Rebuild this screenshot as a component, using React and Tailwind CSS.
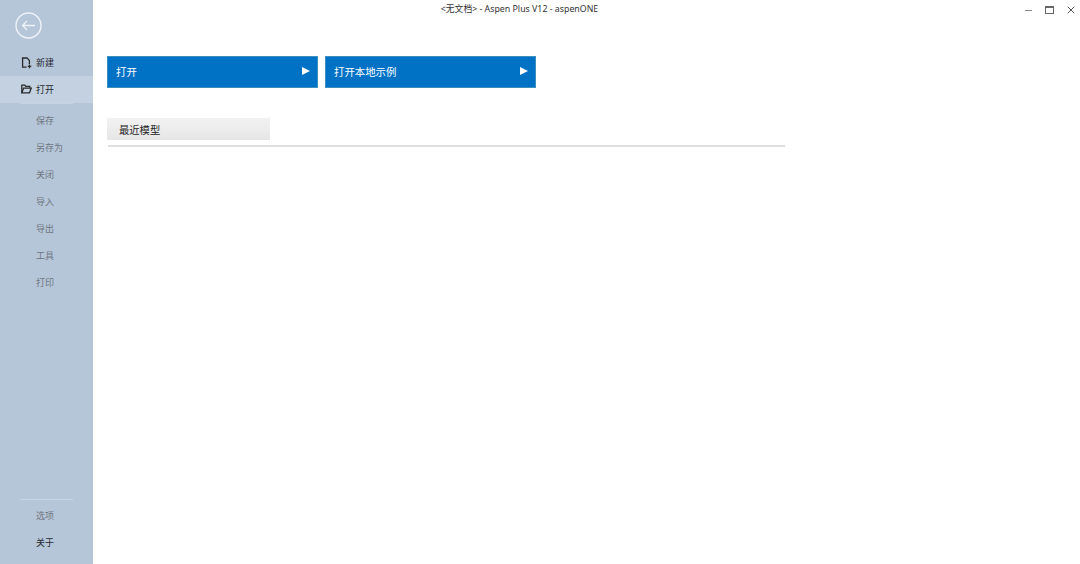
import { Minus, X } from "lucide-react"

const font = { cjk: "font-['Noto_Sans','Noto_Sans_CJK_SC',sans-serif]" }

function NewIcon() {
    return (
        <svg width="11" height="12" viewBox="0 0 11 12" fill="none" stroke="#2b2b2b" strokeWidth="1.3">
            <path d="M5.5 10.2H1.6V1H6l2.4 2.4V7" />
            <path d="M8.5 7.6v3.6M6.7 9.4h3.6" />
        </svg>
    )
}

function OpenIcon() {
    return (
        <svg width="11" height="10" viewBox="0 0 11 10" fill="none" stroke="#2b2b2b" strokeWidth="1.3">
            <path d="M.8 8.8V1.2h3l1 1.2h4v1.4" />
            <path d="M.8 8.8h7.7l1.7-4.6H2.6z" />
        </svg>
    )
}

function SideItem({ label, icon, active, dark }) {
    return (
        <div className={`h-[27px] flex items-center pl-[36px] relative text-[9px] ${active ? "bg-[#c3d1e1]" : ""} ${dark ? "text-[#262a30]" : "text-[#6f7780]"}`}>
            {icon && <span className="absolute left-[21px] top-[8px] flex">{icon}</span>}
            <span>{label}</span>
        </div>
    )
}

function BlueButton({ label, width }) {
    return (
        <div className={`h-[32px] ${width} bg-[#0072c6] border border-[#3d8fbf] flex items-center justify-between pl-[8px] pr-[7px] text-white text-[10.4px]`}>
            <span className="pt-[2px]">{label}</span>
            <span className="w-0 h-0 mb-[3px] border-y-[4px] border-y-transparent border-l-[8px] border-l-white"></span>
        </div>
    )
}

function App() {
    const greyItems = ["保存", "另存为", "关闭", "导入", "导出", "工具", "打印"]

    return (
        <div className={`w-[1080px] h-[564px] flex bg-white overflow-hidden ${font.cjk}`}>
            <aside className="w-[93px] h-full bg-[#b5c6d9] flex flex-col shrink-0 pt-[12px] pb-[8px]">
                <div className="pl-[15px] mb-[10px]">
                    <svg width="27" height="27" viewBox="0 0 27 27" fill="none" stroke="#eef3f8">
                        <circle cx="13.5" cy="13.5" r="12.5" strokeWidth="1.4" />
                        <path d="M20 13.5H7.5M12 9l-4.5 4.5L12 18" strokeWidth="1.3" />
                    </svg>
                </div>
                <SideItem label="新建" dark icon={<NewIcon />} />
                <SideItem label="打开" dark active icon={<OpenIcon />} />
                <div className="mx-[20px] h-px bg-[#c6d3e2]"></div>
                <div className="pt-[3px]">
                    {greyItems.map((item) => (
                        <SideItem key={item} label={item} />
                    ))}
                </div>
                <div className="mt-auto mx-[20px] h-px bg-[#c6d3e2] mb-[2px]"></div>
                <SideItem label="选项" />
                <SideItem label="关于" dark />
            </aside>

            <main className="flex-1 flex flex-col">
                <div className="h-[20px] flex items-center relative">
                    <div className="w-full pr-[134px] text-center text-[8.8px] text-[#333]">
                        &lt;无文档&gt; - Aspen Plus V12 - aspenONE
                    </div>
                    <div className="absolute right-[3px] top-[4px] flex items-center gap-[11px] text-[#555]">
                        <Minus size={11} strokeWidth={1.5} />
                        <span className="w-[9px] h-[8px] border border-[#666] border-t-2"></span>
                        <X size={12} strokeWidth={2} />
                    </div>
                </div>

                <div className="pl-[14px] pt-[36px]">
                    <div className="flex gap-[7px]">
                        <BlueButton label="打开" width="w-[211px]" />
                        <BlueButton label="打开本地示例" width="w-[211px]" />
                    </div>

                    <div className="mt-[30px] w-[163px] h-[22px] bg-gradient-to-b from-[#f2f2f2] to-[#e6e6e6] flex items-center pl-[12px] pt-[3px] text-[10.3px] text-[#222]">
                        最近模型
                    </div>
                    <div className="w-[677px] ml-[1px] mt-[5px] h-[2px] bg-[#dedede]"></div>
                </div>
            </main>
        </div>
    )
}

export default App
